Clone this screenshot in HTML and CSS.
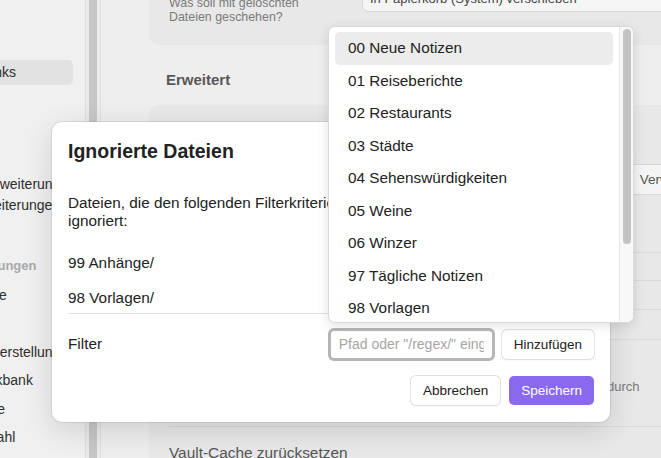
FILE: index.html
```html
<!DOCTYPE html>
<html lang="de">
<head>
<meta charset="UTF-8">
<meta name="viewport" content="width=device-width, initial-scale=1.0">
<title>Einstellungen – Ignorierte Dateien</title>
<link rel="stylesheet" href="styles.css">
</head>
<body>
<div class="app">
  <aside class="sidebar">
    <div class="nav">
      <div class="nav-item">Allgemein</div>
      <div class="nav-item">Editor</div>
      <div class="nav-item active">Dateien &amp; Links</div>
      <div class="nav-item">Darstellung</div>
      <div class="nav-item">Tastenkürzel</div>
      <div class="nav-item">Kern-Plugins</div>
      <div class="nav-item compact">Installierte Erweiterungen</div>
      <div class="nav-item compact">Weitere Erweiterungen</div>
      <div class="nav-heading">Kernerweiterungen</div>
      <div class="nav-item">Befehlspalette</div>
      <div class="nav-item">Canvas</div>
      <div class="nav-item">Dateiwiederherstellung</div>
      <div class="nav-item">Notizen-Werkbank</div>
      <div class="nav-item">Rückverweise</div>
      <div class="nav-item">Schnellauswahl</div>
    </div>
  </aside>
  <div class="sidebar-scroll"><div class="thumb"></div></div>

  <main class="settings">
    <div class="group group-top">
      <div class="setting setting-top">
        <div class="setting-info">
          <div class="setting-name">Gelöschte Dateien</div>
          <div class="setting-desc">Was soll mit gelöschten Dateien geschehen?</div>
        </div>
        <div class="select">In Papierkorb (System) verschieben</div>
      </div>
    </div>

    <h3 class="group-heading">Erweitert</h3>

    <div class="group">
      <div class="setting row-a">
        <div class="setting-info">
          <div class="setting-name">Ignorierte Dateien</div>
          <div class="setting-desc">Diese Dateien werden in Suche und Graph ausgeblendet.</div>
        </div>
        <button class="btn btn-muted">Verwalten</button>
      </div>
      <div class="setting row-b"></div>
      <div class="setting row-c"></div>
      <div class="setting row-d"></div>
      <div class="setting row-e">
        <div class="setting-info">
          <div class="setting-name">Dateinamen bereinigen</div>
          <div class="setting-desc">Falls aktiviert, werden Leerzeichen und Sonderzeichen in allen Dateinamen durch<br>einen Bindestrich ersetzt.</div>
        </div>
      </div>
      <div class="setting row-f">
        <div class="setting-info">
          <div class="setting-name setting-name-lg">Vault-Cache zurücksetzen</div>
        </div>
      </div>
    </div>
  </main>
</div>

<div class="modal">
  <h2 class="modal-title">Ignorierte Dateien</h2>
  <p class="modal-desc">Dateien, die den folgenden Filterkriterien entsprechen, werden in der Suche ignoriert:</p>
  <ul class="ignored-list">
    <li>99 Anhänge/</li>
    <li>98 Vorlagen/</li>
  </ul>
  <div class="filter-row">
    <span class="filter-label">Filter</span>
    <input class="filter-input" type="text" placeholder="Pfad oder &quot;/regex/&quot; eingeben">
    <button class="btn">Hinzufügen</button>
  </div>
  <div class="modal-buttons">
    <button class="btn">Abbrechen</button>
    <button class="btn btn-primary">Speichern</button>
  </div>
</div>

<div class="suggest">
  <div class="suggest-list">
    <div class="suggest-item selected">00 Neue Notizen</div>
    <div class="suggest-item">01 Reiseberichte</div>
    <div class="suggest-item">02 Restaurants</div>
    <div class="suggest-item">03 Städte</div>
    <div class="suggest-item">04 Sehenswürdigkeiten</div>
    <div class="suggest-item">05 Weine</div>
    <div class="suggest-item">06 Winzer</div>
    <div class="suggest-item">97 Tägliche Notizen</div>
    <div class="suggest-item">98 Vorlagen</div>
    <div class="suggest-item">99 Anhänge</div>
  </div>
  <div class="suggest-track"><div class="suggest-thumb"></div></div>
</div>
</body>
</html>
```

FILE: styles.css
```css
* {
  box-sizing: border-box;
}
body {
  margin: 0;
  width: 661px;
  height: 458px;
  overflow: hidden;
  position: relative;
  font-family: "Liberation Sans", Arial, sans-serif;
  color: #222;
}
.app {
  display: flex;
  height: 458px;
  overflow: hidden;
  background-color: #eeeeee;
}

/* sidebar */
.sidebar {
  width: 86px;
  flex: none;
  overflow: hidden;
  background-color: #f0f0f0;
  border-right: 1px solid #e0e0e0;
}
.nav {
  width: 163px;
  margin-left: -90px;
  padding-top: 2.5px;
}
.nav-item {
  height: 25px;
  line-height: 25px;
  margin-bottom: 3.5px;
  padding: 0 14px 0 8px;
  font-size: 14px;
  color: #2e2e2e;
  white-space: nowrap;
  overflow: hidden;
  border-radius: 5px;
}
.nav-item.active {
  background-color: #e2e2e2;
}
.nav-item.compact {
  height: 21px;
  line-height: 21px;
  margin-bottom: 0;
}
.nav-heading {
  height: 20px;
  line-height: 20px;
  margin: 40.5px 0 6.5px;
  padding: 0 22px 0 8px;
  font-size: 13px;
  font-weight: bold;
  color: #a9a9a9;
  white-space: nowrap;
}
.sidebar-scroll {
  width: 15px;
  flex: none;
  padding: 0 3px 0 2.5px;
  background-color: #eaeaea;
  border-right: 1px solid #e0e0e0;
}
.sidebar-scroll .thumb {
  height: 100%;
  background-color: #c7c7c7;
}

/* settings page */
.settings {
  flex: 1;
  min-width: 0;
  padding-left: 48px;
}
.group {
  width: 582px;
  padding: 0 20px;
  background-color: #e8e8e8;
  border-radius: 10px;
}
.group-top {
  margin-top: -40px;
}
.setting {
  display: flex;
  align-items: center;
  gap: 16px;
}
.setting + .setting {
  border-top: 1px solid #dadada;
}
.setting-top {
  padding: 14px 0 20px;
}
.setting-info {
  flex: 1;
  min-width: 0;
}
.setting-name {
  font-size: 15px;
  line-height: 19px;
  color: #555;
}
.setting-name-lg {
  font-size: 15.4px;
  line-height: 19.5px;
}
.setting-desc {
  margin-top: 3px;
  font-size: 13px;
  line-height: 15px;
  color: #7a7a7a;
  white-space: nowrap;
}
.setting-top .setting-desc {
  width: 150px;
  font-size: 12.4px;
  line-height: 14.4px;
  white-space: normal;
}
.select {
  flex: none;
  width: 349px;
  height: 26px;
  line-height: 24px;
  padding: 0 7px;
  font-size: 13px;
  color: #444;
  background-color: #f5f5f5;
  border: 1px solid #d6d6d6;
  border-radius: 6px;
  white-space: nowrap;
}
.group-heading {
  margin: 25px 0 15px 17px;
  font-size: 15px;
  line-height: 20px;
  font-weight: bold;
  color: #585858;
}
.row-a {
  height: 147px;
  padding-top: 2px;
}
.row-b { height: 28px; }
.row-c { height: 29px; }
.row-d { height: 30px; }
.row-e { height: 87px; }
.row-f {
  height: 80px;
  align-items: flex-start;
  padding-top: 16px;
}

/* buttons */
.btn {
  height: 29px;
  padding: 0 12px;
  font-family: "Liberation Sans", Arial, sans-serif;
  font-size: 13.5px;
  line-height: 29px;
  color: #222;
  background-color: #fff;
  border: none;
  border-radius: 5px;
  box-shadow: 0 0 0 1px #e0e0e0, 0 1px 2px rgba(0, 0, 0, 0.07);
  white-space: nowrap;
  cursor: pointer;
}
.btn-muted {
  flex: none;
  color: #555;
  background-color: #f4f4f4;
  box-shadow: 0 0 0 1px #d8d8d8;
}
.btn-primary {
  color: #fff;
  background-color: #8b69ef;
  box-shadow: none;
}

/* modal */
.modal {
  position: absolute;
  left: 52px;
  top: 122px;
  width: 558px;
  padding: 16px 16px 17px;
  background-color: #fff;
  border-radius: 10px;
  box-shadow: 0 0 0 1px rgba(0, 0, 0, 0.07), 0 8px 30px rgba(0, 0, 0, 0.14);
}
.modal-title {
  margin: 0;
  font-size: 19.5px;
  line-height: 26px;
  font-weight: bold;
}
.modal-desc {
  margin: 29.5px 0 0;
  font-size: 15.3px;
  line-height: 18.5px;
}
.ignored-list {
  margin: 22px 0 0;
  padding: 0;
  list-style: none;
  font-size: 15.3px;
  line-height: 19.5px;
}
.ignored-list li + li {
  margin-top: 16.2px;
}
.filter-row {
  display: flex;
  align-items: center;
  margin-top: 5.3px;
  padding-top: 14px;
  border-top: 1px solid #e3e3e3;
  font-size: 15.3px;
}
.filter-label {
  flex: 1;
}
.filter-input {
  width: 167px;
  height: 33px;
  padding: 0 8px;
  font-family: "Liberation Sans", Arial, sans-serif;
  font-size: 14px;
  color: #222;
  background-color: #fff;
  border: 3px solid #b6b6b6;
  border-radius: 6px;
  outline: none;
}
.filter-input::placeholder {
  color: #a6a6a6;
}
.filter-row .btn {
  margin-left: 7px;
}
.modal-buttons {
  display: flex;
  justify-content: flex-end;
  gap: 9px;
  margin-top: 15px;
}

/* folder suggestions */
.suggest {
  position: absolute;
  left: 328px;
  top: 26px;
  width: 306px;
  height: 297px;
  display: flex;
  overflow: hidden;
  background-color: #fff;
  border: 1px solid #d9d9d9;
  border-radius: 7px;
  box-shadow: 0 3px 12px rgba(0, 0, 0, 0.12);
}
.suggest-list {
  flex: 1;
  padding: 5px 6px 0;
  overflow: hidden;
}
.suggest-item {
  height: 32.5px;
  line-height: 32.5px;
  padding-left: 13px;
  font-size: 15.3px;
  color: #222;
  white-space: nowrap;
  border-radius: 5px;
}
.suggest-item.selected {
  background-color: #ececec;
}
.suggest-track {
  width: 14px;
  flex: none;
  padding: 2px 2px 0 2.5px;
  background-color: #f8f8f8;
  border-left: 1px solid #e8e8e8;
}
.suggest-thumb {
  height: 215px;
  background-color: #c3c3c3;
  border-radius: 5px;
}
```
